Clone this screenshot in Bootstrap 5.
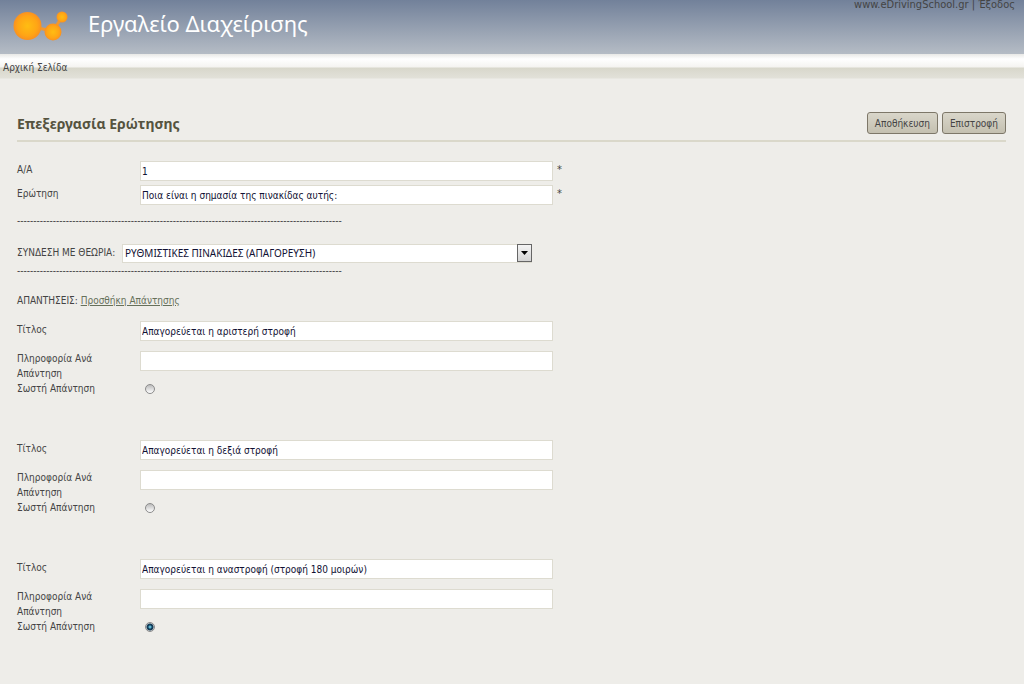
<!DOCTYPE html>
<html lang="el">
<head>
<meta charset="utf-8">
<meta name="viewport" content="width=device-width, initial-scale=1">
<title>Εργαλείο Διαχείρισης</title>
<link href="https://cdn.jsdelivr.net/npm/bootstrap@5.3.0/dist/css/bootstrap.min.css" rel="stylesheet">
<style>
body{background:#eeede9;color:#444;font:10px/15px "DejaVu Sans Condensed","DejaVu Sans",sans-serif}
.masthead{height:54px;background:linear-gradient(#72819a,#b5bcc5)}
.masthead h1{font:22px/30px "Noto Sans","Open Sans",sans-serif;color:#fff}
.masthead nav{font-size:11px;line-height:10px;padding-right:9px}
.masthead nav a,.crumbs a{color:#444;text-decoration:none}
.crumbs{height:25px;padding:2px 3px 0;background:linear-gradient(#e8e8e6,#fff 5px,#f5f4f1 13px,#d8d7cb 14px,#e2e1d9 24px,#eeede9)}
.editor{padding:32px 18px 24px 17px}
.titlebar{border-bottom:2px solid #dad8ca;padding-bottom:6px}
.titlebar h2{font:bold 14px/20px "Noto Sans","Open Sans",sans-serif;color:#55533f;padding-top:3px}
.btn-tool{font-size:10px;line-height:15px;height:22px;padding:3px 7px;color:#444;border:1px solid #7d7768;border-radius:3px;background:linear-gradient(#d9d6ca,#c4c0b0)}
.fields{padding-top:19px}
.line{display:grid;grid-template-columns:123px minmax(0,413px) auto;align-items:start}
.line label{padding-right:24px}
.fields .line label,.title-line label,.req{padding-top:1px}
.line .form-control,.picker{height:20px;min-height:0;padding:2px 1px;border:1px solid #dddbd0;border-radius:0;font-size:10px;line-height:14px;color:#113;background-color:#fff}
.req{padding-left:4px;font-size:11px}
.rule{white-space:nowrap}
.theory label{min-width:105px;white-space:nowrap;padding-top:1px}
.picker{display:block;height:19px;width:410px;max-width:100%;appearance:none;padding:1px 20px 2px 2px;font-family:"Noto Sans",sans-serif}
.arrow{right:0;top:0;width:15px;height:18px;border:1px solid #666;background:linear-gradient(#f4f4f4,#d4d4d4);pointer-events:none}
.line input[type=radio]{appearance:none;width:10px;height:10px;margin:3px 0 0 5px;border:1px solid #8b8b8b;border-radius:50%;background:linear-gradient(#bbb,#fff)}
.line input[type=radio]:checked{background:radial-gradient(circle,#5fb8d4 0 1px,#123c58 2px 3px,#ddd 4px)}
.answers{padding:15px 0 13px}
.answer{margin-bottom:44px}
.title-line{margin-bottom:10px}
.add{color:#66705a}
</style>
</head>
<body>
<header class="masthead d-flex justify-content-between">
  <div class="d-flex">
    <svg class="ms-2 mt-1" width="68" height="44" viewBox="8 4 68 44" aria-hidden="true">
      <defs><radialGradient id="orb"><stop offset="0" stop-color="#ffbd12"/><stop offset=".7" stop-color="#ffa515"/><stop offset="1" stop-color="#fa9120"/></radialGradient></defs>
      <path d="M38 28L53 31L62 17" stroke="#f09830" stroke-width="3" fill="none"/>
      <circle cx="27.500" cy="26" r="14" fill="url(#orb)"/><circle cx="53" cy="32" r="8.500" fill="url(#orb)"/><circle cx="62" cy="17" r="5.500" fill="url(#orb)"/>
    </svg>
    <h1 class="mb-0 ms-2 mt-2 ps-1">Εργαλείο Διαχείρισης</h1>
  </div>
  <nav><a href="#">www.eDrivingSchool.gr</a> | <a href="#">Έξοδος</a></nav>
</header>
<nav class="crumbs d-flex align-items-center"><a href="#">Αρχική Σελίδα</a></nav>
<main class="editor">
<form>
  <div class="titlebar d-flex justify-content-between align-items-center">
    <h2 class="mb-0">Επεξεργασία Ερώτησης</h2>
    <div class="d-flex gap-1"><button type="button" class="btn btn-tool">Αποθήκευση</button><button type="button" class="btn btn-tool">Επιστροφή</button></div>
  </div>
  <div class="fields">
    <div class="line mb-1"><label for="num">Α/Α</label><input class="form-control" id="num" value="1"><span class="req">*</span></div>
    <div class="line"><label for="q">Ερώτηση</label><input class="form-control" id="q" value="Ποια είναι η σημασία της πινακίδας αυτής:"><span class="req">*</span></div>
  </div>
  <div class="rule mt-2 mb-3">----------------------------------------------------------------------------------------------------</div>
  <div class="theory d-flex"><label for="th">ΣΥΝΔΕΣΗ ΜΕ ΘΕΩΡΙΑ:</label>
    <div class="position-relative"><select class="picker" id="th"><option>ΡΥΘΜΙΣΤΙΚΕΣ ΠΙΝΑΚΙΔΕΣ (ΑΠΑΓΟΡΕΥΣΗ)</option></select><svg class="arrow position-absolute" viewBox="0 0 13 16" aria-hidden="true"><path d="M3 6H10L6.500 10Z"/></svg></div></div>
  <div class="rule">----------------------------------------------------------------------------------------------------</div>
  <div class="answers">ΑΠΑΝΤΗΣΕΙΣ: <a class="add" href="#">Προσθήκη Απάντησης</a></div>
  <section class="answer">
    <div class="line title-line"><label for="t1">Τίτλος</label><input class="form-control" id="t1" value="Απαγορεύεται η αριστερή στροφή"></div>
    <div class="line"><label for="i1">Πληροφορία Ανά Απάντηση</label><input class="form-control" id="i1"></div>
    <div class="line"><label for="r1">Σωστή Απάντηση</label><input type="radio" name="ok" id="r1"></div>
  </section>
  <section class="answer">
    <div class="line title-line"><label for="t2">Τίτλος</label><input class="form-control" id="t2" value="Απαγορεύεται η δεξιά στροφή"></div>
    <div class="line"><label for="i2">Πληροφορία Ανά Απάντηση</label><input class="form-control" id="i2"></div>
    <div class="line"><label for="r2">Σωστή Απάντηση</label><input type="radio" name="ok" id="r2"></div>
  </section>
  <section>
    <div class="line title-line"><label for="t3">Τίτλος</label><input class="form-control" id="t3" value="Απαγορεύεται η αναστροφή (στροφή 180 μοιρών)"></div>
    <div class="line"><label for="i3">Πληροφορία Ανά Απάντηση</label><input class="form-control" id="i3"></div>
    <div class="line"><label for="r3">Σωστή Απάντηση</label><input type="radio" name="ok" id="r3" checked></div>
  </section>
</form>
</main>
<script src="https://cdn.jsdelivr.net/npm/bootstrap@5.3.0/dist/js/bootstrap.bundle.min.js"></script>
</body>
</html>
